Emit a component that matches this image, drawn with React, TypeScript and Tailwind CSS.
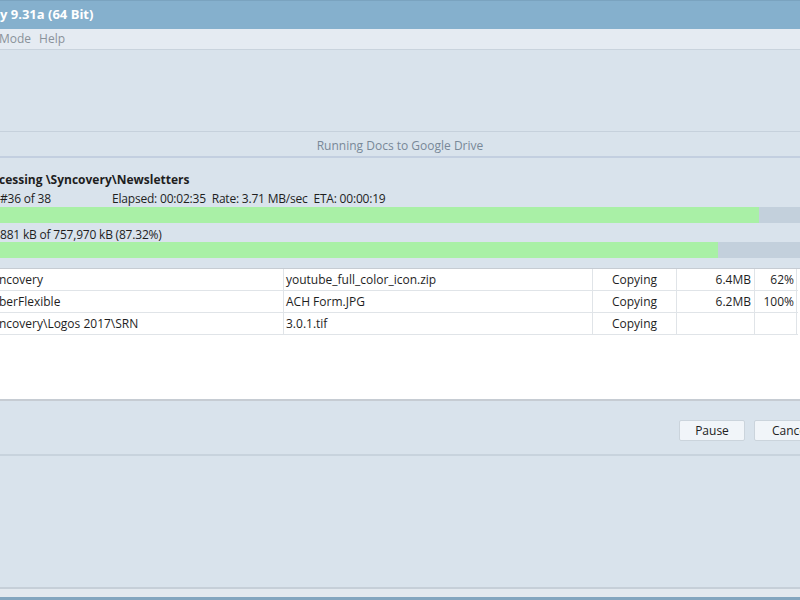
const rows = [
  { folder: "ncovery", file: "youtube_full_color_icon.zip", status: "Copying", size: "6.4MB", pct: "62%" },
  { folder: "berFlexible", file: "ACH Form.JPG", status: "Copying", size: "6.2MB", pct: "100%" },
  { folder: "ncovery\\Logos 2017\\SRN", file: "3.0.1.tif", status: "Copying", size: "", pct: "" },
]

function Bar({ pct }: { pct: number }) {
  return (
    <div className="h-[16px] w-full bg-[#c3d0dc] flex">
      <div className="h-full bg-[#a9f0a6]" style={{ width: `${pct}%` }} />
    </div>
  )
}

export default function App() {
  return (
    <div className="w-[800px] h-[600px] flex flex-col bg-[#d9e3ec] text-[#1e1e1e] overflow-hidden" style={{ fontFamily: '"Open Sans", "Noto Sans", sans-serif' }}>
      {/* title bar */}
      <div className="h-[29px] bg-[#85b0cd] border-t border-[#7aa3bf] flex items-center text-white font-bold text-[13px] shrink-0">
        y 9.31a (64 Bit)
      </div>
      {/* menu */}
      <div className="h-[21px] bg-[#e5ebf2] flex items-center gap-[8px] text-[12px] text-[#8a929a] shrink-0 border-b border-[#c9d3dd]">
        <span className="-ml-px">Mode</span>
        <span>Help</span>
      </div>
      <div className="h-[82px] shrink-0 border-b border-[#c6d1dc]" />
      {/* header */}
      <div className="h-[26px] shrink-0 flex items-center justify-center pt-[3px] text-[12px] text-[#788898] border-b-2 border-[#c3cfe0]">
        Running Docs to Google Drive
      </div>

      <div className="pt-[13px] flex flex-col shrink-0">
        <div className="font-bold text-[12px] h-[18px] leading-[18px] -ml-[1px]">cessing \Syncovery\Newsletters</div>
        <div className="flex text-[12px] h-[16px] leading-[16px] mt-[2px] tracking-[-0.2px]">
          <span className="w-[112px]">#36 of 38</span>
          <span>Elapsed: 00:02:35&nbsp; Rate: 3.71 MB/sec&nbsp; ETA: 00:00:19</span>
        </div>
        <Bar pct={94.9} />
        <div className="text-[12px] h-[19px] pt-[4px] leading-[15px] tracking-[-0.2px]">881 kB of 757,970 kB (87.32%)</div>
        <Bar pct={89.8} />
      </div>

      {/* table */}
      <div className="mt-[10px] h-[133px] shrink-0 bg-white border-t border-[#c6ccd3] border-b-2 border-b-[#c6ccd3]">
        <div className="w-[798px] text-[12px]">
          {rows.map((r) => (
            <div key={r.file} className="flex h-[22px] border-b border-[#e0e4e8] leading-[21px]">
              <div className="w-[285px] border-r border-[#e0e4e8] -ml-[1px]">{r.folder}</div>
              <div className="w-[309px] border-r border-[#e0e4e8] pl-[2px]">{r.file}</div>
              <div className="w-[84px] border-r border-[#e0e4e8] text-center">{r.status}</div>
              <div className="w-[78px] border-r border-[#e0e4e8] text-right pr-[3px]">{r.size}</div>
              <div className="w-[42px] border-r border-[#e0e4e8] text-right pr-[2px]">{r.pct}</div>
            </div>
          ))}
        </div>
      </div>

      {/* buttons */}
      <div className="h-[55px] shrink-0 flex items-start justify-end gap-[9px] pt-[19px] border-b-2 border-[#c8d3dd]">
        <button className="w-[66px] h-[21px] bg-[#f1f5f9] border border-[#cbd4dc] rounded-[2px] text-[12px] text-[#222] leading-[19px]">Pause</button>
        <button className="w-[66px] h-[21px] bg-[#f1f5f9] border border-[#cbd4dc] rounded-[2px] text-[12px] text-[#222] leading-[19px] text-left pl-[17px] -mr-[20px]">Cancel</button>
      </div>

      <div className="flex-1" />
      <div className="h-[10px] shrink-0 bg-[#e3e9ef] border-t-2 border-[#c6cfd8]" />
      <div className="h-[3px] shrink-0 bg-[#84a6bf]" />
    </div>
  )
}
